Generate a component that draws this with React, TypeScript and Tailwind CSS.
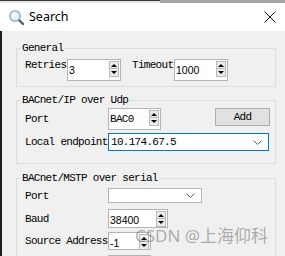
import React from "react";

const mono = "whitespace-nowrap font-['Liberation_Mono',monospace] text-[11px] leading-[12px] tracking-[-0.7px] text-black";
const sans = "whitespace-nowrap font-['Liberation_Sans',Arial,sans-serif] text-[10.5px] leading-[12px] text-black";

function SpinButtons() {
  return (
    <div className="flex w-[10px] flex-col border border-[#b9b9b9] bg-[#ececec]">
      <div className="flex h-[7px] items-center justify-center border-b border-[#b9b9b9]">
        <div className="h-0 w-0 border-x-[3px] border-b-[3px] border-x-transparent border-b-black" />
      </div>
      <div className="flex h-[7px] items-center justify-center">
        <div className="h-0 w-0 border-x-[3px] border-t-[3px] border-x-transparent border-t-black" />
      </div>
    </div>
  );
}

function Spin({ value, className, font }: { value: string; className: string; font: string }) {
  return (
    <div className={`flex shrink-0 items-start border border-[#b4b4b4] bg-white ${className}`}>
      <span className={`pl-[1px] pt-[4px] ${font}`}>{value}</span>
      <div className="ml-auto mr-[1px] mt-[1px]">
        <SpinButtons />
      </div>
    </div>
  );
}

function Chevron() {
  return (
    <svg width="9" height="5" viewBox="0 0 9 5" className="ml-auto mr-[6px]">
      <path d="M0.5 0.5 L4.5 4.5 L8.5 0.5" fill="none" stroke="#606060" strokeWidth="1" />
    </svg>
  );
}

function Label({ children, className }: { children?: React.ReactNode; className: string }) {
  return <span className={`shrink-0 overflow-visible ${mono} ${className}`}>{children}</span>;
}

function Group({ title, children, className }: { title: string; children: React.ReactNode; className: string }) {
  return (
    <fieldset className={`ml-[14px] w-[260px] border border-[#dcdcdc] ${className}`}>
      <legend className={`ml-[4px] px-[1px] ${mono}`}>{title}</legend>
      {children}
    </fieldset>
  );
}

export default function App() {
  return (
    <div className="relative h-[256px] w-[285px] overflow-hidden bg-white">
      <div className="flex h-[3px]">
        <div className="w-[160px] border-t border-[#3a3a3a] bg-[#e6e6e6]" />
        <div className="flex-1 bg-[#a4a4a4]" />
      </div>

      <div className="flex h-[28px] items-center bg-white">
        <svg width="17" height="17" viewBox="0 0 17 17" className="ml-[8px]">
          <line x1="10.5" y1="10.5" x2="15" y2="15" stroke="#5a5a5a" strokeWidth="2.4" strokeLinecap="round" />
          <circle cx="7" cy="7" r="5.2" fill="#e3f1fb" stroke="#8aa6bf" strokeWidth="1.3" />
          <circle cx="6" cy="5.8" r="2" fill="#ffffff" opacity="0.8" />
        </svg>
        <span className="ml-[4px] font-['Noto_Sans',sans-serif] text-[12.5px] text-black">Search</span>
        <svg width="12" height="12" viewBox="0 0 12 12" className="ml-auto mr-[9px]">
          <path d="M0.5 0.5 L11.5 11.5 M11.5 0.5 L0.5 11.5" stroke="#111" strokeWidth="1" />
        </svg>
      </div>

      <div className="flex h-[225px] flex-col border-l-2 border-[#1c1c1c] bg-[#f0f0f0] pt-[11px]">
        <Group title="General" className="">
          <div className="flex items-start pb-[5px] pl-[8px] pt-[5px]">
            <Label className="w-[42px]">Retries</Label>
            <Spin value="3" className="h-[22px] w-[54px]" font={sans} />
            <Label className="ml-[11px] w-[42px]">Timeout</Label>
            <Spin value="1000" className="h-[22px] w-[54px]" font={sans} />
          </div>
        </Group>

        <Group title="BACnet/IP over Udp" className="mt-[7px]">
          <div className="flex flex-col gap-[3px] pb-[12px] pl-[8px] pr-[5px] pt-[2px]">
            <div className="flex items-center">
              <Label className="w-[83px]">Port</Label>
              <Spin value="BAC0" className="h-[22px] w-[53px]" font={mono} />
              <button className={`ml-auto h-[18px] w-[55px] self-start border border-[#adadad] bg-[#e1e1e1] ${mono}`}>
                Add
              </button>
            </div>
            <div className="flex items-center">
              <Label className="w-[83px]">Local endpoint</Label>
              <div className="flex h-[18px] w-[161px] shrink-0 items-center border border-[#0078d7] bg-white">
                <span className={`pl-[2px] ${mono}`}>10.174.67.5</span>
                <Chevron />
              </div>
            </div>
          </div>
        </Group>

        <Group title="BACnet/MSTP over serial" className="mt-[8px]">
          <div className="flex flex-col pl-[8px] pt-[4px]">
            <div className="flex items-center">
              <Label className="w-[83px]">Port</Label>
              <div className="flex h-[15px] w-[94px] items-center border border-[#b4b4b4] bg-white">
                <Chevron />
              </div>
            </div>
            <div className="mt-[6px] flex items-center">
              <Label className="w-[83px]">Baud</Label>
              <Spin value="38400" className="h-[19px] w-[60px]" font={sans} />
            </div>
            <div className="mt-[4px] flex items-center">
              <Label className="w-[83px]">Source Address</Label>
              <Spin value="-1" className="h-[18px] w-[43px]" font={sans} />
            </div>
            <div className="mt-[5px] flex items-center">
              <Label className="w-[83px]" />
              <div className="h-[18px] w-[43px] border border-[#b4b4b4] bg-white" />
            </div>
          </div>
        </Group>
      </div>

      <div className="pointer-events-none absolute left-[135px] top-[226px] whitespace-nowrap font-['Noto_Sans','Noto_Sans_CJK_SC',sans-serif] text-[17px] leading-[20px] text-[rgba(110,110,110,0.55)]">
        CSDN @上海仰科
      </div>
    </div>
  );
}
